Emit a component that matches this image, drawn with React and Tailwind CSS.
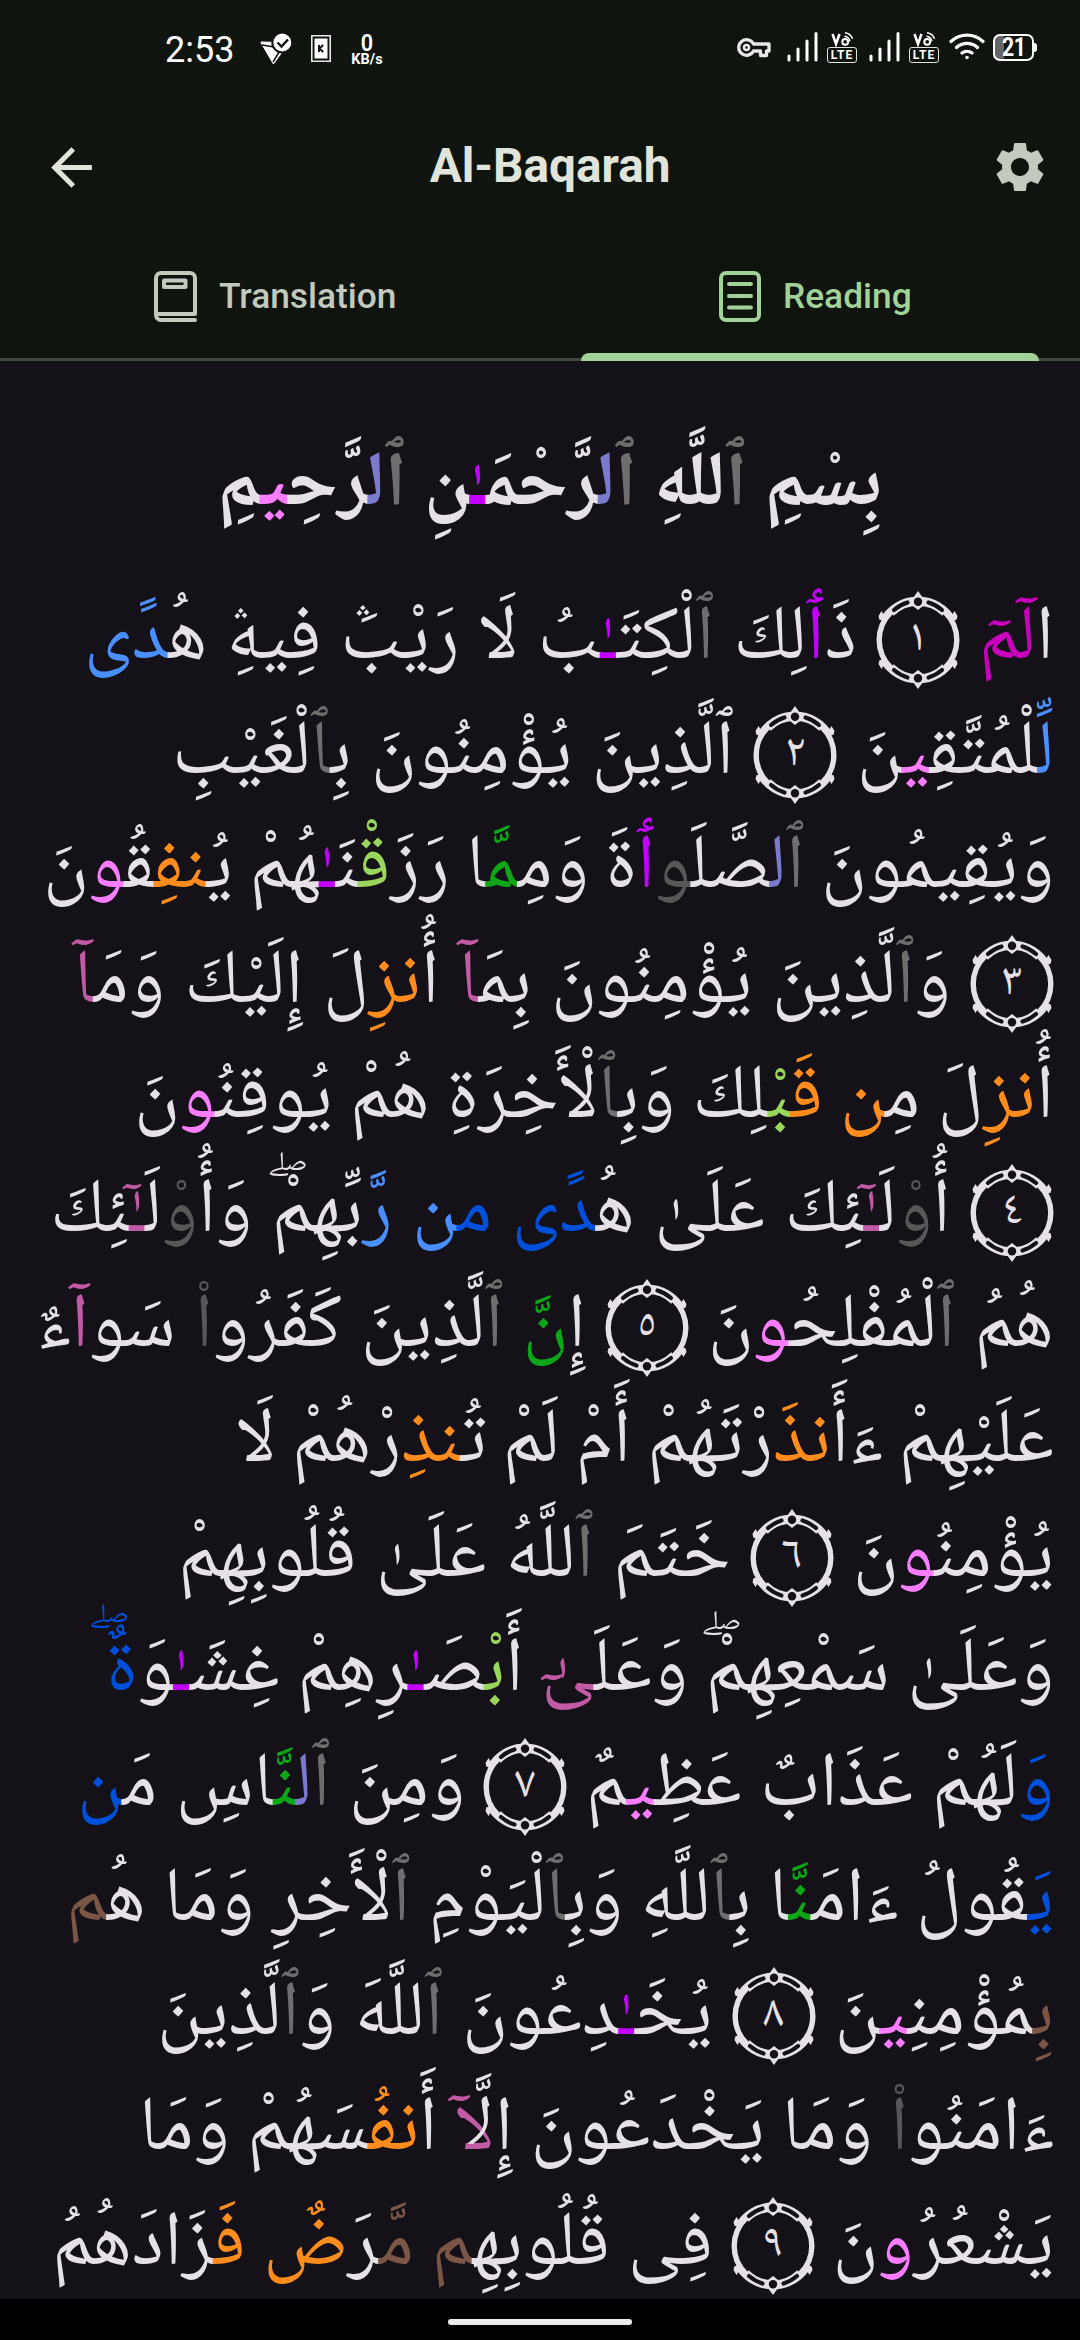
import React from "react";

const COLORS = {
  g: "text-[#6e6e6e]",
  d: "text-[#575757]",
  v: "text-[#7b7bcd]",
  m: "text-[#c400ff]",
  p: "text-[#fa7cff]",
  M: "text-[#c900bc]",
  b: "text-[#4a8fff]",
  B: "text-[#0050dc]",
  G: "text-[#0ca616]",
  l: "text-[#9ad65c]",
  o: "text-[#ff8c1c]",
  k: "text-[#c25aa5]",
  r: "text-[#7b5647]",
};

// Each line: its set width, then its words. Plain and coloured runs alternate between bars;
// a coloured run starts with its colour key. A digit in braces is a verse-end marker,
// a sign in braces is set above the preceding letter.
const LINES = [
  [970, "ا|Mلٓمٓ| {١} ذ|mَٲ|لِكَ |gٱ|لْكِتَ|mـٰ|بُ لَا رَيْبَ{ۛ} فِيهِ{ۛ2} هُ|bدًى|"],
  [882, "|bل|ِّلْمُتَّق|pِي|نَ {٢} ٱلَّذِينَ يُؤْمِنُونَ بِ|gٱ|لْغَيْبِ"],
  [1011, "وَيُقِيمُونَ |gٱ||vل|صَّلَ|dو||mٲ|ةَ وَمِ|Gمَّ|ا رَزَ|lقْ|نَ|mـٰ|هُمْ يُ|oنف|ِق|pُو|نَ"],
  [980, "{٣} وَ|gٱ|لَّذِينَ يُؤْمِنُونَ بِم|kَآ| أُ|oنز|ِلَ إِلَيْكَ وَم|kَآ|"],
  [920, "أُ|oنز|ِلَ مِ|oن| |oق|َ|lبْ|لِكَ وَبِ|gٱ|لْأَخِرَةِ هُمْ يُوقِن|pُو|نَ"],
  [1004, "{٤} أُ|dو۟|لَ|kـٰ|{ٓ}ئِكَ عَلَىٰ هُ|Bدًى| |Bم||bن| |bر|َّبِّهِمْ{ۖ} وَأُ|dو۟|لَ|kـٰ|{ٓ}ئِكَ"],
  [1017, "هُمُ |gٱ|لْمُفْلِح|pُو|نَ {٥} إِ|Gنَّ| |gٱ|لَّذِينَ كَفَرُو|dا۟| سَو|kا|ٓءٌ"],
  [818, "عَلَيْهِمْ ءَأَ|oنذ|َرْتَهُمْ أَمْ لَمْ تُ|oنذ|ِرْهُمْ لَا"],
  [876, "يُؤْمِن|pُو|نَ {٦} خَتَمَ |gٱ|للَّهُ عَلَىٰ قُلُوبِهِمْ"],
  [948, "وَعَلَىٰ سَمْعِهِمْ{ۖ} وَعَلَ|kىٰٓ| أَ|lبْ|صَ|mـٰ|رِهِمْ غِشَ|mـٰ|وَ|Bةٌ|{ۖB}"],
  [977, "|Bو|َلَهُمْ عَذَابٌ عَظ|pِي|مٌ {٧} وَمِنَ |gٱ||vل||Gنَّ|اسِ م|Bَن|"],
  [988, "|Bي|َقُولُ ءَامَ|Gنَّ|ا بِ|gٱ|للَّهِ وَبِ|gٱ|لْيَوْمِ |gٱ|لْأَخِرِ وَمَا ه|rُم|"],
  [897, "|rب|ِمُؤْمِن|pِي|نَ {٨} يُخَ|mـٰ|دِعُونَ |gٱ|للَّهَ وَ|gٱ|لَّذِينَ"],
  [915, "ءَامَنُو|dا۟| وَمَا يَخْدَعُونَ إِل|kَّآ| أَ|oنف|ُسَهُمْ وَمَا"],
  [1002, "يَشْعُر|pُو|نَ {٩} فِى قُلُوبِه|rِم| |rم|َّرَ|oضٌ| |oف|َزَادَهُمُ"],
];
const BASMALA = "بِسْمِ |gٱ|للَّهِ |gٱ||vل|رَّحْمَ|mـٰ|نِ |gٱ||vل|رَّح|pِي|مِ";

function Half() {
  return (
    <>
      <path d="M-36.200-19.300A41 41 0 0 1 36.200-19.300" strokeWidth="4.800" stroke="#e6e1e6" fill="none" />
      <path d="M-26-26A36.800 36.800 0 0 1 26-26" strokeWidth="5" stroke="#e6e1e6" fill="none" />
      <path d="M0-49l5 7h-10zM0-30l5-4h-10zM-38.500-20l-1-4 3-5 3 5z M38.500-20l1-4-3-5-3 5z" fill="#e6e1e6" />
      <circle cx="0" cy="-38.300" r="4.200" fill="#141218" />
      <path d="M-24-30Q-17.500-35.500-10.500-37.500M24-30Q17.500-35.500 10.500-37.500" stroke="#141218" strokeWidth="4.200" strokeLinecap="round" fill="none" />
    </>
  );
}

function Marker({ n }) {
  return (
    <span className="relative inline-flex h-[98px] w-[84px] items-center justify-center align-[8px]">
      <svg className="absolute inset-0" width="84" height="98" viewBox="-42 -49 84 98" overflow="visible">
        <circle r="38.800" fill="none" stroke="#e6e1e6" strokeWidth="5.400" />
        <Half />
        <g transform="scale(1 -1)"><Half /></g>
      </svg>
      <span className="relative text-[46px] leading-none">{n}</span>
    </span>
  );
}

const SIGN_STYLES = {
  "ۛ": "left-[15px] bottom-[-7px] text-[68px]",
  "ۛ2": "left-[7px] bottom-[-10px] text-[68px]",
  "ۖ": "left-[8px] bottom-[1px] text-[73px]",
  "ۖB": "left-[-5px] bottom-[8px] text-[73px] text-[#0050dc]",
  "ٓ": "left-[-4px] bottom-[4px] text-[66px] text-[#c25aa5]",
};

function Sign({ t }) {
  return (
    <span className="relative inline-block w-0">
      <span className={"absolute leading-none " + SIGN_STYLES[t]}>{"\u00a0" + t[0]}</span>
    </span>
  );
}

function Rich({ text }) {
  return text.split("|").map((s, i) => {
    if (i % 2) return <span key={i} className={COLORS[s[0]]}>{s.slice(1)}</span>;
    return s.split(/[{}]/).map((t, j) => {
      if (j % 2 === 0) return j && /^[ئ]/.test(t) ? "\u200d" + t : t;
      return /[١-٩]/.test(t) ? <Marker key={i + "-" + j} n={t} /> : <Sign key={i + "-" + j} t={t} />;
    });
  });
}

function Signal() {
  return (
    <svg width="32" height="32" viewBox="0 0 32 32" stroke="#fff" strokeWidth="3" strokeLinecap="round">
      <path d="M2 25v4M11 18v11M20 10v19M29 2.500v26.500" />
    </svg>
  );
}

function VoLte() {
  return (
    <div className="flex w-[30px] flex-col items-center">
      <svg width="30" height="15" viewBox="0 0 30 15" fill="none" stroke="#fff" strokeWidth="2">
        <path d="M5.500 2l3.500 10L12.500 2" strokeWidth="2.500" />
        <circle cx="18.200" cy="9.800" r="2.900" />
        <path d="M17.500 4.300a6 6 0 0 1 5.300 5M18 .8a9.500 9.500 0 0 1 7.500 6" strokeWidth="1.600" />
      </svg>
      <div className="flex h-4 w-[30px] items-center justify-center rounded-[3px] border border-[#dfe3dc] text-[12px] leading-none font-bold tracking-[1px] text-white">LTE</div>
    </div>
  );
}

export default function App() {
  return (
    <div className="flex h-[2340px] w-[1080px] flex-col overflow-hidden bg-[#141218] font-['Roboto','Noto_Sans',sans-serif]">
      <header className="flex h-[361px] flex-col bg-[#10140f]">
        <div className="flex h-[100px] items-center pr-[43px] pl-[165px] text-white">
          <span className="w-[95px] text-[36px] leading-none">2:53</span>
          <svg className="mb-[2px]" width="32" height="32" viewBox="0 0 32 32">
            <path d="M1.500 9.500L16 10l7 7-9.500 13z" fill="#fff" stroke="#fff" strokeWidth="2" strokeLinejoin="round" />
            <path d="M2 12l12 2M21 16l-8 13" stroke="#10140f" strokeWidth="1.500" />
            <circle cx="22.300" cy="9.500" r="10" fill="#fff" stroke="#10140f" strokeWidth="2" />
            <path d="M17.500 9.500l4 4 6.500-7" stroke="#10140f" strokeWidth="2.400" fill="none" />
          </svg>
          <svg className="mb-1 ml-[19px]" width="20" height="27" viewBox="0 0 20 27">
            <path d="M.8.8h18.400v25.400H.8z" fill="none" stroke="#e8e8e8" strokeWidth="1.600" />
            <path d="M3.500 3.500h13v20h-13z" fill="#fff" />
            <path d="M8 10v7M12.200 10L8.500 13.500l3.700 3.500" stroke="#10140f" strokeWidth="2" fill="none" />
          </svg>
          <div className="mb-[2px] ml-[20px] flex w-[32px] flex-col items-center">
            <span className="scale-x-90 text-[24px] leading-[20px] font-semibold">0</span>
            <span className="text-[14.500px] leading-[13px] font-bold">KB/s</span>
          </div>
          <div className="mb-[6px] ml-auto flex items-center">
            <svg className="mt-[2px]" width="34" height="22" viewBox="0 0 34 22" fill="none" stroke="#e8e8e8" strokeWidth="3.300" strokeLinejoin="round">
              <path d="M16.500 7H32v7h-2.500v4.500h-6V14h-7A7.800 7.800 0 1 1 16.500 7z" />
              <circle cx="9.500" cy="10.500" r="2.500" strokeWidth="2.500" />
            </svg>
            <div className="ml-[16px] flex items-center gap-[8px]">
              <Signal /><VoLte />
            </div>
            <div className="ml-[12px] flex items-center gap-[8px]">
              <Signal /><VoLte />
            </div>
            <svg className="mb-[2px] ml-[10px]" width="36" height="28" viewBox="0 0 36 28" fill="none" stroke="#fff" strokeWidth="3.200" strokeLinecap="round">
              <path d="M2 9.500a23.500 23.500 0 0 1 32 0M7.500 15.500a15.500 15.500 0 0 1 21 0M13 21a8 8 0 0 1 10 0" />
              <circle cx="18" cy="25.500" r="1.800" fill="#fff" stroke="none" />
            </svg>
            <div className="ml-[8px] flex items-center">
              <div className="flex h-[27px] w-[41px] items-center justify-center rounded-[7px] border-2 border-white bg-linear-to-r from-[#666] from-25% to-transparent to-25% leading-none font-bold">
                <span className="scale-x-85 text-[25px] tracking-[-0.500px]">21</span>
              </div>
              <div className="h-[9px] w-[3px] rounded-r bg-white" />
            </div>
          </div>
        </div>
        <div className="flex h-[134px] items-center justify-between pr-[30px] pl-[41px]">
          <svg width="61" height="61" viewBox="0 0 24 24" fill="#e0e4db"><path d="M20 11H7.830l5.590-5.590L12 4l-8 8 8 8 1.410-1.410L7.830 13H20v-2z" /></svg>
          <h1 className="ml-[8px] text-[47.7px] leading-none font-bold text-[#e0e4db]">Al-Baqarah</h1>
          <svg width="60" height="60" viewBox="0 0 24 24" fill="#c2c9bd"><path d="M19.140 12.940c.04-.3.06-.61.06-.94 0-.32-.02-.64-.07-.94l2.030-1.580a.49.49 0 0 0 .12-.61l-1.920-3.320a.488.488 0 0 0-.59-.22l-2.390.96c-.5-.38-1.030-.7-1.620-.94l-.36-2.540a.484.484 0 0 0-.48-.41h-3.840c-.24 0-.43.17-.47.41l-.36 2.540c-.59.24-1.130.57-1.620.94l-2.390-.96c-.22-.08-.47 0-.59.22L2.740 8.870c-.12.21-.08.47.12.61l2.030 1.580c-.05.3-.09.63-.09.94s.02.64.07.94l-2.030 1.580a.49.49 0 0 0-.12.61l1.920 3.320c.12.22.37.29.59.22l2.390-.96c.5.38 1.030.7 1.620.94l.36 2.540c.05.24.24.41.48.41h3.840c.24 0 .44-.17.47-.41l.36-2.540c.59-.24 1.130-.56 1.620-.94l2.390.96c.22.08.47 0 .59-.22l1.920-3.320c.12-.22.07-.47-.12-.61l-2.010-1.580zM12 15.600c-1.980 0-3.600-1.620-3.600-3.600s1.620-3.600 3.600-3.600 3.600 1.620 3.600 3.600-1.620 3.600-3.600 3.600z" /></svg>
        </div>
        <div className="flex h-[127px] border-b-[3px] border-[#424940] text-[35.300px] font-medium">
          <div className="flex h-[127px] w-[540px] items-center pb-[2px] pl-[154px] text-[#c2c9bd]">
            <svg width="43" height="51" viewBox="0 0 43 51" fill="none" stroke="currentColor" strokeWidth="4" strokeLinecap="round">
              <path d="M41 43V7a5 5 0 0 0-5-5H7a5 5 0 0 0-5 5v37a5 5 0 0 0 5 5h34M4 43h37" />
              <path d="M10 9.500h21.500v6.500H10z" strokeLinejoin="round" />
            </svg>
            <span className="ml-[22px]">Translation</span>
          </div>
          <div className="relative flex h-[127px] w-[540px] items-center pb-[2px] pl-[179px] text-[#a1d399]">
            <svg width="42" height="51" viewBox="0 0 42 51" fill="none" stroke="currentColor" strokeWidth="4" strokeLinecap="round">
              <rect x="2" y="2" width="38" height="47" rx="5" />
              <path d="M10 13h22M10 25h22M10 36.500h22" />
            </svg>
            <span className="ml-[22px]">Reading</span>
            <div className="absolute bottom-0 left-[41px] h-[8px] w-[458px] rounded-t-[8px] bg-[#a1d399]" />
          </div>
        </div>
      </header>
      <main dir="rtl" className="h-[1938px] overflow-hidden font-['Noto_Naskh_Arabic','Scheherazade_New','DejaVu_Sans',serif] text-[77px] whitespace-nowrap text-[#e6e1e6]">
        <div className="mt-[63px] h-[161px] pl-[19px] text-center leading-[130px] font-bold"><Rich text={BASMALA} /></div>
        <div className="pr-[26px]">
          {LINES.map(([w, t], i) => (
            <div key={i} className="flex h-[114.7px] items-baseline justify-between leading-[114.7px]" style={{ width: w }}>
              {t.split(" ").map((word, j) => <span key={j}><Rich text={word} /></span>)}
            </div>
          ))}
        </div>
      </main>
      <footer className="flex flex-1 justify-center bg-black pt-5">
        <div className="h-[6px] w-[184px] rounded-full bg-[#ececec]" />
      </footer>
    </div>
  );
}
